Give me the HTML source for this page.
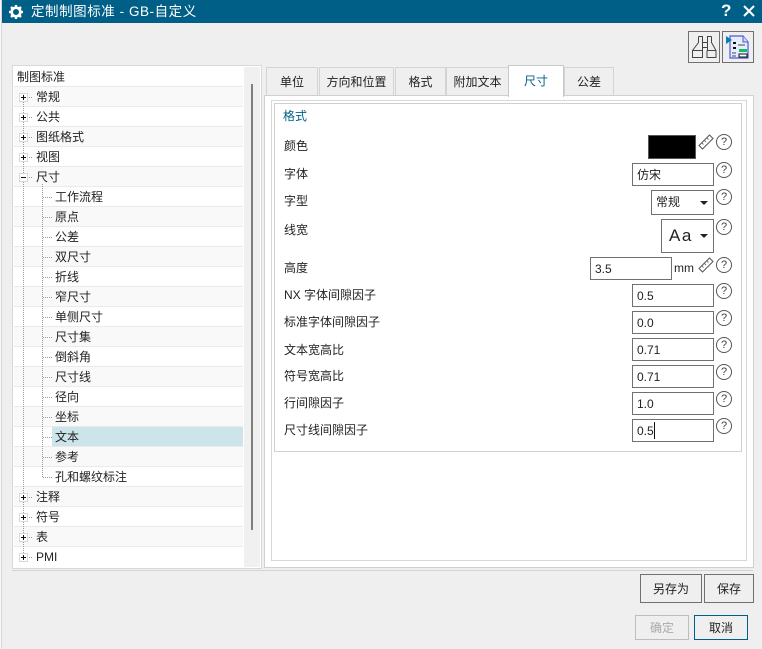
<!DOCTYPE html>
<html><head><meta charset="utf-8"><style>
html,body{margin:0;padding:0}
body{width:762px;height:649px;overflow:hidden;background:#efefef;position:relative;font:12px/20px "Liberation Sans","Noto Sans CJK SC",sans-serif;color:#222}
div,span{position:absolute;box-sizing:border-box;white-space:nowrap}
.row{left:14px;width:229px;height:20px;border-bottom:1px solid #eaeaea;background:#fff}
.odd{background:#f9f9f9}
.t{line-height:20px;font-size:12px}
.pm{left:19px;width:9px;height:9px;border:1px solid #d8d8d8;background:#fff}
.pm:before{content:"";position:absolute;left:1px;top:3px;width:5px;height:1px;background:#111}
.pl:after{content:"";position:absolute;left:3px;top:1px;width:1px;height:5px;background:#111}
.dh{height:1px;background:repeating-linear-gradient(90deg,#999 0 1px,transparent 1px 2px)}
.dv{width:1px;background:repeating-linear-gradient(180deg,#999 0 1px,transparent 1px 2px)}
.tab{top:67px;height:29px;background:#efefef;border:1px solid #d4d4d4;border-bottom:0;text-align:center;line-height:28px;color:#222}
.inp{height:24px;border:1px solid #707070;background:#fff;padding-left:4px;line-height:23px;color:#222;font-size:12px}
.lb{left:284px;line-height:18px;color:#222}
.h{left:716px;width:16px;height:16px;border:1px solid #555;border-radius:50%;background:#fff;text-align:center;line-height:14px;font-size:11px;color:#444}
.btn{border:1px solid #707070;background:#efefef;text-align:center;color:#222}
</style></head><body>
<div style="left:0;top:0;width:2px;height:649px;background:#f7f7f7;border-right:1px solid #d8d8d8"></div>
<div style="left:2px;top:0;width:760px;height:23px;background:#005f87"></div>
<svg style="position:absolute;left:8px;top:4px" width="16" height="16" viewBox="0 0 16 16"><circle cx="8" cy="8" r="4.3" fill="none" stroke="#fff" stroke-width="2.6"/><g stroke="#fff" stroke-width="2.4"><path d="M8 1v3M8 12v3M1 8h3M12 8h3M3 3l2 2M11 11l2 2M3 13l2-2M11 5l2-2"/></g></svg>
<div style="left:31px;top:2px;color:#fff;font-size:13.5px;line-height:20px;letter-spacing:.55px">定制制图标准 - GB-自定义</div>
<div style="left:721px;top:1px;color:#fff;font-size:17px;font-weight:bold;line-height:20px">?</div>
<svg style="position:absolute;left:743px;top:5px" width="12" height="12" viewBox="0 0 12 12"><path d="M1 1L11 11M11 1L1 11" stroke="#fff" stroke-width="2"/></svg>

<div style="left:688px;top:31px;width:32px;height:32px;border:1px solid #707070;background:#efefef"></div>
<svg style="position:absolute;left:688px;top:31px" width="32" height="32" viewBox="688 31 32 32" fill="none" stroke="#444" stroke-width="1"><path d="M698.500 36.500h4v14M707.500 50.500v-14h4M698.500 36.500v6l-6 8v7h10v-7M711.500 36.500v6l4.500 8v7h-9v-7M692.500 50.500h10M707.500 50.500h8.500M702.500 42.500h5M702.500 47.500h5"/></svg>
<div style="left:722px;top:31px;width:32px;height:32px;border:1px solid #707070;background:#efefef"></div>
<svg style="position:absolute;left:725px;top:34px" width="27" height="27" viewBox="0 0 27 27"><path d="M5 2h13l5 6v16H5z" fill="#e8ecff" stroke="#4a5ad8" stroke-width="1.2"/><path d="M18 2v6h5" fill="#cfd6fa" stroke="#4a5ad8"/><path d="M1 2l6 4-6 4z" fill="#0a80b0"/><path d="M8 8h3v2H8zM8 13h3v2H8z" fill="#111"/><path d="M13 11h7M7 19h4M7 22h4" stroke="#444"/><path d="M14 15h8v3h-8z" fill="#10c060"/><path d="M14 20h8v3h-8z" fill="#fff" stroke="#111"/></svg>

<!-- tree -->
<div style="left:12px;top:65px;width:250px;height:504px;background:#fff;border:1px solid #d8d8d8"></div>
<div style="left:244px;top:67px;width:16px;height:500px;background:#f0f0f0"></div>
<div style="left:251px;top:84px;width:2px;height:446px;background:#808080"></div>
<div style="left:12px;top:570px;width:741px;height:1px;background:#d4d4d4"></div>
<div class="row" style="top:67px"></div>
<div class="row odd" style="top:87px"></div><div class="row" style="top:107px"></div>
<div class="row odd" style="top:127px"></div><div class="row" style="top:147px"></div>
<div class="row odd" style="top:167px"></div><div class="row" style="top:187px"></div>
<div class="row odd" style="top:207px"></div><div class="row" style="top:227px"></div>
<div class="row odd" style="top:247px"></div><div class="row" style="top:267px"></div>
<div class="row odd" style="top:287px"></div><div class="row" style="top:307px"></div>
<div class="row odd" style="top:327px"></div><div class="row" style="top:347px"></div>
<div class="row odd" style="top:367px"></div><div class="row" style="top:387px"></div>
<div class="row odd" style="top:407px"></div><div class="row" style="top:427px"></div>
<div class="row odd" style="top:447px"></div><div class="row" style="top:467px"></div>
<div class="row odd" style="top:487px"></div><div class="row" style="top:507px"></div>
<div class="row odd" style="top:527px"></div><div class="row" style="top:547px;height:19px;border:0"></div>
<div style="left:52px;top:427px;width:191px;height:19px;background:#cde4ea"></div>
<div class="dv" style="left:23px;top:100px;height:456px"></div>
<div class="dv" style="left:42px;top:184px;height:293px"></div>
<div class="dh" style="left:29px;top:97px;width:4px"></div><div class="dh" style="left:29px;top:117px;width:4px"></div>
<div class="dh" style="left:29px;top:137px;width:4px"></div><div class="dh" style="left:29px;top:157px;width:4px"></div>
<div class="dh" style="left:29px;top:177px;width:4px"></div><div class="dh" style="left:29px;top:497px;width:4px"></div>
<div class="dh" style="left:29px;top:517px;width:4px"></div><div class="dh" style="left:29px;top:537px;width:4px"></div>
<div class="dh" style="left:29px;top:557px;width:4px"></div>
<div class="dh" style="left:43px;top:197px;width:9px"></div><div class="dh" style="left:43px;top:217px;width:9px"></div>
<div class="dh" style="left:43px;top:237px;width:9px"></div><div class="dh" style="left:43px;top:257px;width:9px"></div>
<div class="dh" style="left:43px;top:277px;width:9px"></div><div class="dh" style="left:43px;top:297px;width:9px"></div>
<div class="dh" style="left:43px;top:317px;width:9px"></div><div class="dh" style="left:43px;top:337px;width:9px"></div>
<div class="dh" style="left:43px;top:357px;width:9px"></div><div class="dh" style="left:43px;top:377px;width:9px"></div>
<div class="dh" style="left:43px;top:397px;width:9px"></div><div class="dh" style="left:43px;top:417px;width:9px"></div>
<div class="dh" style="left:43px;top:437px;width:9px"></div><div class="dh" style="left:43px;top:457px;width:9px"></div>
<div class="dh" style="left:43px;top:477px;width:9px"></div>
<div class="pm pl" style="top:93px"></div><div class="pm pl" style="top:113px"></div><div class="pm pl" style="top:133px"></div>
<div class="pm pl" style="top:153px"></div><div class="pm" style="top:173px"></div><div class="pm pl" style="top:493px"></div>
<div class="pm pl" style="top:513px"></div><div class="pm pl" style="top:533px"></div><div class="pm pl" style="top:553px"></div>
<div class="t" style="left:17px;top:67px">制图标准</div>
<div class="t" style="left:36px;top:87px">常规</div>
<div class="t" style="left:36px;top:107px">公共</div>
<div class="t" style="left:36px;top:127px">图纸格式</div>
<div class="t" style="left:36px;top:147px">视图</div>
<div class="t" style="left:36px;top:167px">尺寸</div>
<div class="t" style="left:55px;top:187px">工作流程</div>
<div class="t" style="left:55px;top:207px">原点</div>
<div class="t" style="left:55px;top:227px">公差</div>
<div class="t" style="left:55px;top:247px">双尺寸</div>
<div class="t" style="left:55px;top:267px">折线</div>
<div class="t" style="left:55px;top:287px">窄尺寸</div>
<div class="t" style="left:55px;top:307px">单侧尺寸</div>
<div class="t" style="left:55px;top:327px">尺寸集</div>
<div class="t" style="left:55px;top:347px">倒斜角</div>
<div class="t" style="left:55px;top:367px">尺寸线</div>
<div class="t" style="left:55px;top:387px">径向</div>
<div class="t" style="left:55px;top:407px">坐标</div>
<div class="t" style="left:55px;top:427px">文本</div>
<div class="t" style="left:55px;top:447px">参考</div>
<div class="t" style="left:55px;top:467px">孔和螺纹标注</div>
<div class="t" style="left:36px;top:487px">注释</div>
<div class="t" style="left:36px;top:507px">符号</div>
<div class="t" style="left:36px;top:527px">表</div>
<div class="t" style="left:36px;top:547px">PMI</div>

<!-- tabs and panel -->
<div class="tab" style="left:266px;width:52px">单位</div>
<div class="tab" style="left:319px;width:75px">方向和位置</div>
<div class="tab" style="left:395px;width:51px">格式</div>
<div class="tab" style="left:446px;width:63px">附加文本</div>
<div class="tab" style="left:564px;width:50px">公差</div>
<div style="left:264px;top:95px;width:490px;height:473px;background:#fff;border:1px solid #d0d0d0"></div>
<div class="tab" style="left:508px;top:65px;width:56px;height:32px;background:#fff;border-color:#c8c8c8;color:#005f87;line-height:31px;z-index:2">尺寸</div>
<div style="left:271px;top:100px;width:476px;height:461px;border:1px solid #d8d8d8"></div>
<div style="left:274px;top:103px;width:468px;height:349px;border:1px solid #d0d0d0"></div>
<div style="left:283px;top:107px;line-height:18px;color:#005f87">格式</div>

<div class="lb" style="top:137px">颜色</div>
<div class="lb" style="top:165px">字体</div>
<div class="lb" style="top:192px">字型</div>
<div class="lb" style="top:221px">线宽</div>
<div class="lb" style="top:259px">高度</div>
<div class="lb" style="top:286px">NX 字体间隙因子</div>
<div class="lb" style="top:313px">标准字体间隙因子</div>
<div class="lb" style="top:341px">文本宽高比</div>
<div class="lb" style="top:367px">符号宽高比</div>
<div class="lb" style="top:394px">行间隙因子</div>
<div class="lb" style="top:421px">尺寸线间隙因子</div>

<div style="left:648px;top:135px;width:48px;height:24px;background:#000;border:1px solid #555"></div>
<svg style="position:absolute;left:698px;top:134px" width="16" height="16" viewBox="0 0 16 16" fill="none" stroke="#555"><path d="M1 11.500L11.500 1 15 4.500 4.500 15z"/><path d="M4 9l1.500 1.500M6.500 6.500L8 8M9 4l1.500 1.500" stroke="#777"/></svg>
<div class="inp" style="left:632px;top:163px;width:82px;height:23px">仿宋</div>
<div class="inp" style="left:651px;top:190px;width:63px;height:25px">常规</div>
<div style="left:700px;top:201px;width:0;height:0;border-left:4px solid transparent;border-right:4px solid transparent;border-top:4px solid #222"></div>
<div class="inp" style="left:661px;top:219px;width:53px;height:34px;font-size:17px;line-height:31px;padding-left:7px;letter-spacing:1.500px">Aa</div>
<div style="left:700px;top:234px;width:0;height:0;border-left:4px solid transparent;border-right:4px solid transparent;border-top:4px solid #222"></div>
<div class="inp" style="left:590px;top:257px;width:82px;height:23px">3.5</div>
<div style="left:674px;top:259px;line-height:18px">mm</div>
<svg style="position:absolute;left:698px;top:257px" width="16" height="16" viewBox="0 0 16 16" fill="none" stroke="#555"><path d="M1 11.500L11.500 1 15 4.500 4.500 15z"/><path d="M4 9l1.500 1.500M6.500 6.500L8 8M9 4l1.500 1.500" stroke="#777"/></svg>
<div class="inp" style="left:632px;top:284px;width:82px;height:23px">0.5</div>
<div class="inp" style="left:632px;top:311px;width:82px;height:23px">0.0</div>
<div class="inp" style="left:632px;top:338px;width:82px;height:23px">0.71</div>
<div class="inp" style="left:632px;top:365px;width:82px;height:23px">0.71</div>
<div class="inp" style="left:632px;top:392px;width:82px;height:23px">1.0</div>
<div class="inp" style="left:632px;top:419px;width:82px;height:23px">0.5</div>
<div style="left:654px;top:422px;width:1px;height:17px;background:#111"></div>

<div class="h" style="top:134px">?</div><div class="h" style="top:162px">?</div><div class="h" style="top:189px">?</div>
<div class="h" style="top:219px">?</div><div class="h" style="top:257px">?</div><div class="h" style="top:283px">?</div>
<div class="h" style="top:310px">?</div><div class="h" style="top:337px">?</div><div class="h" style="top:364px">?</div>
<div class="h" style="top:391px">?</div><div class="h" style="top:418px">?</div>

<!-- buttons -->
<div class="btn" style="left:640px;top:574px;width:62px;height:29px;line-height:28px">另存为</div>
<div class="btn" style="left:704px;top:574px;width:50px;height:29px;line-height:28px">保存</div>
<div class="btn" style="left:635px;top:615px;width:54px;height:25px;line-height:24px;border-color:#bdbdbd;color:#aaa">确定</div>
<div class="btn" style="left:694px;top:615px;width:54px;height:25px;line-height:24px;border-color:#005f87">取消</div>
</body></html>
